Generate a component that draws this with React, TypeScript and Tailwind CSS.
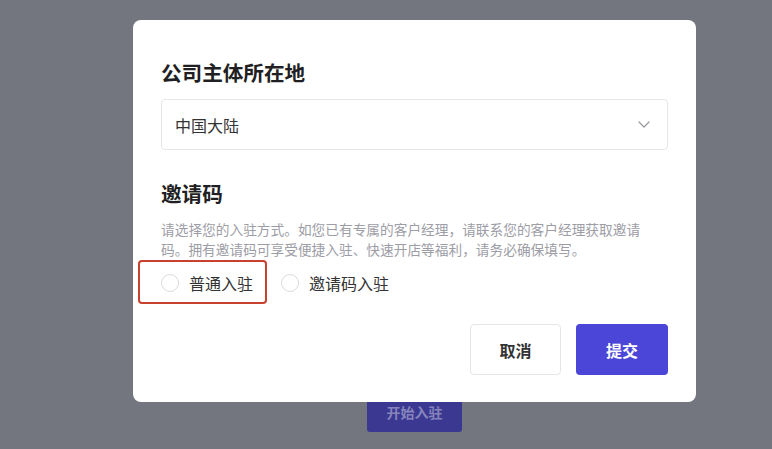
export default function App() {
  return (
    <div className="relative w-[772px] h-[449px] overflow-hidden bg-[#73757f] font-['Noto_Sans_CJK_SC',sans-serif]">
      {/* page behind the overlay */}
      <div className="pt-[392px] pl-[367px]">
        <button className="w-[95px] h-[40px] rounded-[3px] bg-[#3a3891] text-[14px] font-bold text-[#8784bd]">
          开始入驻
        </button>
      </div>

      {/* modal */}
      <div className="absolute left-[133px] top-[20px] w-[563px] h-[382px] rounded-[8px] bg-white pl-[28px] pr-[28px] pt-[38px]">
        <h2 className="text-[20.6px] leading-[28px] font-bold text-[#1f1f24]">公司主体所在地</h2>

        <div className="mt-[13px] h-[51px] flex items-center justify-between rounded-[4px] border border-[#e6e6e8] pl-[13px] pr-[17px]">
          <span className="text-[16px] text-[#333]">中国大陆</span>
          <svg width="12" height="7" viewBox="0 0 12 7" fill="none">
            <path d="M1 1l5 5 5-5" stroke="#9a9aa0" strokeWidth="1.3" strokeLinecap="round" strokeLinejoin="round" />
          </svg>
        </div>

        <h2 className="mt-[29px] text-[20.6px] leading-[28px] font-bold text-[#1f1f24]">邀请码</h2>

        <p className="mt-[12px] text-[13.7px] leading-[20px] text-[#9d9da6] whitespace-nowrap">
          请选择您的入驻方式。如您已有专属的客户经理，请联系您的客户经理获取邀请
          <br />
          码。拥有邀请码可享受便捷入驻、快速开店等福利，请务必确保填写。
        </p>

        <div className="mt-[12px] h-[24px] flex items-center gap-[28px]">
          <label className="relative flex items-center gap-[10px]">
            <span className="w-[18px] h-[18px] rounded-full border border-[#dcdce0]" />
            <span className="text-[16px] text-[#333]">普通入驻</span>
            <span className="absolute -left-[23px] -top-[11px] w-[129px] h-[44px] rounded-[4px] border-2 border-[#c8412f]" />
          </label>
          <label className="flex items-center gap-[10px]">
            <span className="w-[18px] h-[18px] rounded-full border border-[#dcdce0]" />
            <span className="text-[16px] text-[#333]">邀请码入驻</span>
          </label>
        </div>

        <div className="mt-[29px] flex justify-end gap-[15px]">
          <button className="w-[91px] h-[51px] rounded-[4px] border border-[#e6e6e8] bg-white text-[16px] font-bold text-[#333]">
            取消
          </button>
          <button className="w-[92px] h-[51px] rounded-[4px] bg-[#4b46d8] text-[16px] font-bold text-white">
            提交
          </button>
        </div>
      </div>
    </div>
  );
}
